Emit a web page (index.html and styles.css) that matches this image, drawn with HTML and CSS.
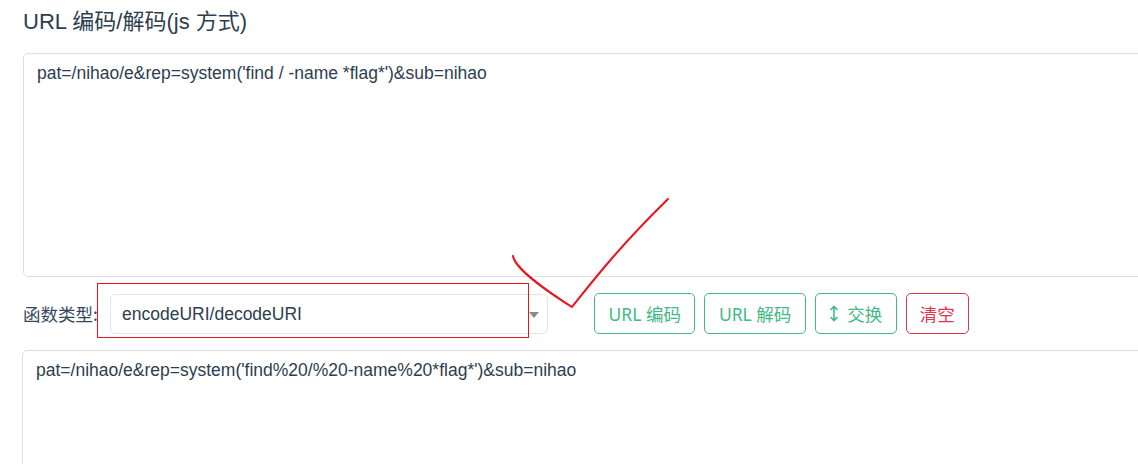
FILE: index.html
```html
<!DOCTYPE html>
<html lang="zh-CN">
<head>
    <meta charset="UTF-8">
    <title>URL 编码/解码</title>
    <link rel="stylesheet" href="styles.css">
</head>
<body>
    <div class="page">
        <h3 class="title">URL 编码/解码(js 方式)</h3>

        <!-- 输入框 -->
        <textarea class="box box1">pat=/nihao/e&amp;rep=system('find / -name *flag*')&amp;sub=nihao</textarea>

        <!-- 操作行 -->
        <div class="tools">
            <label class="lbl">函数类型:</label>
            <div class="sel">
                <span>encodeURI/decodeURI</span>
                <i class="caret"></i>
            </div>
            <div class="btns">
                <button class="btn">URL 编码</button>
                <button class="btn">URL 解码</button>
                <button class="btn">
                    <svg class="ico" width="10" height="17" viewBox="0 0 10 17">
                        <path d="M5 1.5V15.5M1.5 5L5 1.5L8.5 5M1.5 12L5 15.5L8.5 12" fill="none" stroke="currentColor" stroke-width="1.6"/>
                    </svg>
                    交换
                </button>
                <button class="btn red">清空</button>
            </div>
            <!-- 빨간 표시 -->
            <div class="mark"></div>
        </div>

        <!-- 输出框 -->
        <textarea class="box box2">pat=/nihao/e&amp;rep=system('find%20/%20-name%20*flag*')&amp;sub=nihao</textarea>
    </div>

    <!-- 체크 표시 -->
    <svg class="check" width="1138" height="464" viewBox="0 0 1138 464">
        <path d="M513 256C515 268 545 290 572 307C592 282 618 248 668 199" fill="none" stroke="#e8141c" stroke-width="2" stroke-linecap="round"/>
    </svg>
</body>
</html>
```

FILE: styles.css
```css
html, body {
    margin: 0;
    overflow: hidden;
    background: #fff;
}
body {
    font-family: "Liberation Sans", "Noto Sans CJK SC", sans-serif;
    color: #2c3e50;
}
.page {
    padding: 0 0 0 23px;
}
.title {
    margin: 0;
    padding-top: 8px;
    font-size: 22px;
    font-weight: normal;
    line-height: 28px;
    height: 45px;
}
/* 텍스트 박스 */
.box {
    display: block;
    box-sizing: border-box;
    width: 1140px;
    border: 1px solid #dcdfe6;
    border-radius: 5px;
    padding: 7px 13px;
    font-family: "Liberation Sans", "Noto Sans CJK SC", sans-serif;
    font-size: 17.5px;
    line-height: 24px;
    color: #2c3e50;
    resize: none;
    outline: none;
}
.box1 {
    height: 224px;
}
.box2 {
    height: 160px;
    margin-left: -1px;
}
/* 중간 줄 */
.tools {
    position: relative;
    display: flex;
    align-items: center;
    height: 73px;
}
.lbl {
    width: 87px;
    font-family: "Noto Sans CJK SC", sans-serif;
    font-size: 17.5px;
    color: #34495e;
}
.sel {
    position: relative;
    box-sizing: border-box;
    width: 438px;
    height: 40px;
    border: 1px solid #e2e4ea;
    border-radius: 5px;
    padding: 0 11px;
    line-height: 38px;
    font-size: 17.5px;
}
.caret {
    position: absolute;
    right: 8px;
    top: 17px;
    border: 5px solid transparent;
    border-top: 6px solid #888;
    border-bottom: 0;
}
.btns {
    display: flex;
    gap: 9px;
    margin-left: 46px;
}
.btn {
    display: flex;
    align-items: center;
    gap: 8px;
    height: 41px;
    padding: 0 13.5px;
    background: #fff;
    border: 1px solid #42b983;
    border-radius: 5px;
    color: #42b983;
    font-family: "Noto Sans", "Noto Sans CJK SC", sans-serif;
    font-size: 17.5px;
    cursor: pointer;
}
.btn.red {
    border-color: #e0364b;
    color: #e0364b;
    padding: 0 13px;
}
/* 빨간 네모 */
.mark {
    position: absolute;
    left: 74px;
    top: 6px;
    width: 430px;
    height: 53px;
    border: 1px solid #e8141c;
}
.check {
    position: absolute;
    left: 0;
    top: 0;
    pointer-events: none;
}
```
